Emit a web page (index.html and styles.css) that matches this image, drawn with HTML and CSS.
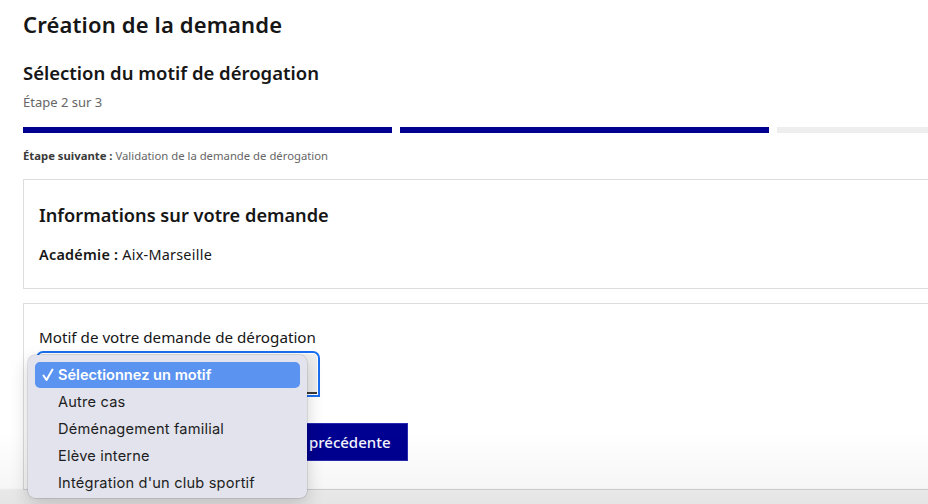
FILE: index.html
```html
<!DOCTYPE html>
<html lang="fr">
<head>
<meta charset="utf-8">
<title>Création de la demande</title>
<link rel="stylesheet" href="styles.css">
</head>
<body>
<main class="page">
  <h1 class="page-title">Création de la demande</h1>
  <div class="stepper">
    <h2 class="stepper-title">Sélection du motif de dérogation</h2>
    <p class="stepper-state">Étape 2 sur 3</p>
    <div class="stepper-bars">
      <span class="bar done"></span>
      <span class="bar done"></span>
      <span class="bar"></span>
    </div>
    <p class="stepper-next"><b>Étape suivante :</b> Validation de la demande de dérogation</p>
  </div>

  <section class="card info">
    <h3 class="card-title">Informations sur votre demande</h3>
    <p class="card-line"><b>Académie :</b> Aix-Marseille</p>
  </section>

  <section class="card form">
    <label class="field-label" for="motif">Motif de votre demande de dérogation</label>
    <div class="select-box" id="motif"></div>
    <div class="actions">
      <button class="btn" type="button">Revenir à l'étape précédente</button>
    </div>
  </section>
</main>

<div class="shade"></div>

<div class="popup" role="listbox">
  <div class="opt selected"><svg class="check" viewBox="0 0 12 14" width="12" height="14"><polyline points="1.5,7.5 4.5,12 10.5,1.5" fill="none" stroke="#fff" stroke-width="2" stroke-linecap="round" stroke-linejoin="round"/></svg>Sélectionnez un motif</div>
  <div class="opt">Autre cas</div>
  <div class="opt">Déménagement familial</div>
  <div class="opt">Elève interne</div>
  <div class="opt">Intégration d'un club sportif</div>
</div>
</body>
</html>
```
FILE: styles.css
```css
html, body {
  margin: 0;
  padding: 0;
  background: #fff;
  overflow: hidden;
  height: 504px;
}
body {
  font-family: "Noto Sans", "Open Sans", sans-serif;
  color: #161616;
  position: relative;
}
.page {
  width: 1123px;
  padding: 9px 0 0 23px;
}
.page-title {
  margin: 0;
  font-size: 22px;
  line-height: 30px;
  font-weight: 600;
  letter-spacing: 0.15px;
}
.stepper { margin-top: 21px; }
.stepper-title {
  margin: 0;
  font-size: 18.5px;
  line-height: 26px;
  font-weight: 600;
}
.stepper-state {
  margin: 7px 0 0;
  font-size: 13px;
  line-height: 18px;
  color: #666;
}
.stepper-bars {
  display: flex;
  gap: 8px;
  margin-top: 16px;
}
.bar {
  flex: 1;
  height: 6px;
  background: #eee;
}
.bar.done { background: #000091; }
.stepper-next {
  margin: 15px 0 0;
  font-size: 11.3px;
  line-height: 16px;
  color: #666;
}
.stepper-next b { color: #3a3a3a; font-weight: 700; }

.card {
  border: 1px solid #ddd;
  background: #fff;
  padding: 0 15px;
  box-sizing: border-box;
}
.info {
  margin-top: 15px;
  padding-top: 22px;
  height: 110px;
}
.card-title {
  margin: 0;
  font-size: 18.2px;
  line-height: 26px;
  font-weight: 600;
}
.card-line {
  margin: 16px 0 0;
  font-size: 14.4px;
  line-height: 22px;
  letter-spacing: 0.25px;
}
.card-line b { font-weight: 600; }

.form {
  margin-top: 14px;
  padding-top: 22px;
  height: 187px;
}
.field-label {
  display: block;
  font-size: 15.2px;
  line-height: 22px;
}
.select-box {
  margin-top: 6px;
  width: 278px;
  height: 40px;
  background: #eee;
  border-radius: 4px 4px 0 0;
  box-shadow: inset 0 -2px 0 0 #3a3a3a;
  outline: 2px solid #1a6ff0;
  outline-offset: 1px;
}
.actions {
  margin-top: 29px;
  display: flex;
  padding-left: 132px;
}
.btn {
  font-family: inherit;
  font-size: 15px;
  font-weight: 500;
  line-height: 22px;
  color: #f5f5fe;
  background: #000091;
  border: 1px solid #2a2ab0;
  padding: 7px 16px 7px 15px;
}

.shade {
  position: absolute;
  left: 0;
  right: 0;
  top: 430px;
  height: 74px;
  background:
    linear-gradient(to bottom, rgba(0,0,0,0) 0, rgba(0,0,0,0.035) 58px, rgba(0,0,0,0.09) 60px, rgba(0,0,0,0.1) 100%);
  pointer-events: none;
}

.popup {
  position: absolute;
  left: 28px;
  top: 355px;
  width: 279px;
  height: 143px;
  box-sizing: border-box;
  padding: 7px 7px;
  border-radius: 7px;
  background: #e2e3ec;
  box-shadow: 0 0 0 0.5px rgba(0,0,0,0.18), 0 6px 18px rgba(0,0,0,0.18);
  font-family: Inter, "Liberation Sans", Arial, sans-serif;
  font-size: 14.6px;
  letter-spacing: 0.2px;
  color: #1d1d22;
}
.opt {
  height: 27px;
  line-height: 27px;
  padding-left: 23px;
  position: relative;
  border-radius: 5px;
}
.opt.selected {
  background: #5b93f0;
  color: #fff;
  font-weight: 600;
  letter-spacing: 0;
  height: 26px;
  line-height: 26px;
  margin-bottom: 1px;
}
.check {
  position: absolute;
  left: 7px;
  top: 6px;
}
```
